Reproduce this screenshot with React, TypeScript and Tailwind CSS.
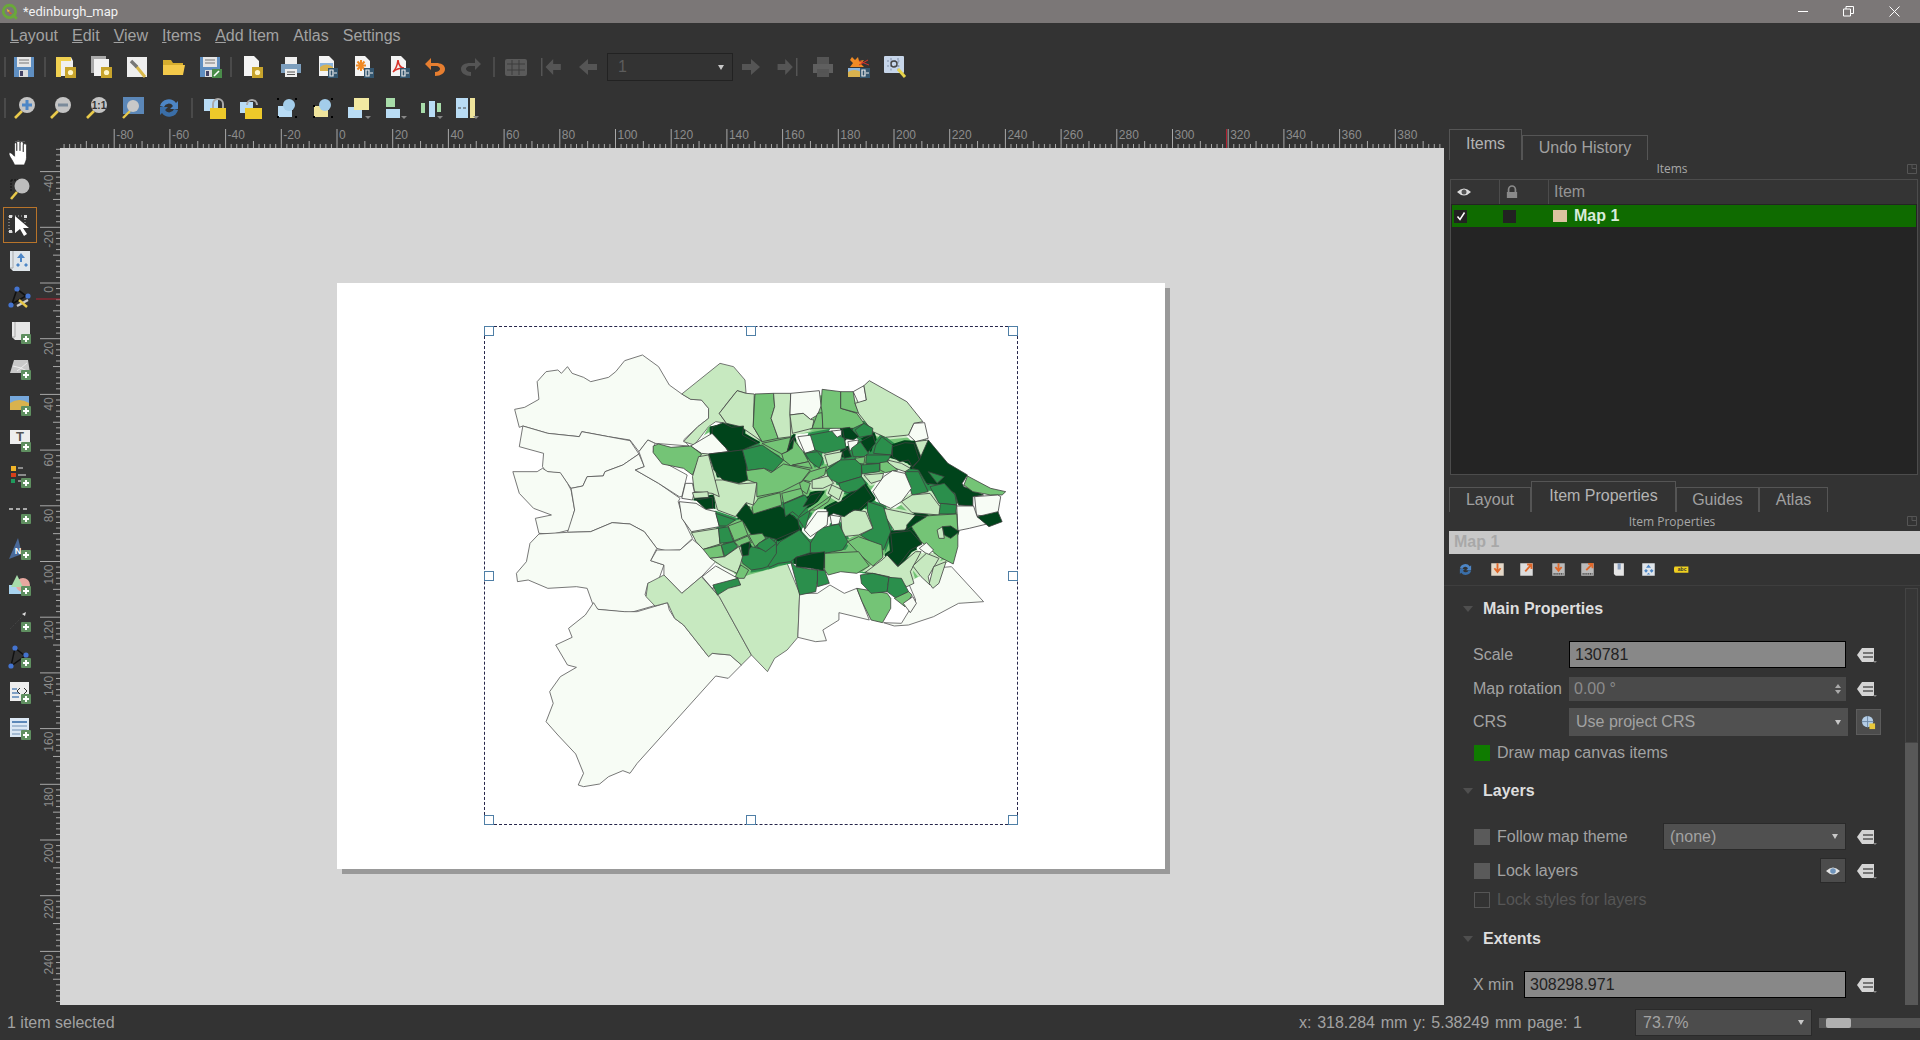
import type { ReactNode } from "react";

const P = "#f7fcf5";
const L = "#c7e9c0";
const M = "#74c476";
const D = "#2b8f4c";
const X = "#00441b";

// outline of the dense middle, used to close the small gaps between the wards
const core = "600,400 640,320 690,310 720,230 1060,225 1230,330 1300,440 1345,520 1340,640 1320,720 1210,780 870,730 700,780 590,640";

// map regions, traced in crop coordinates (see the scale on the group below)
const outer: [string, string][] = [
  [P, "97,268 125,262 165,238 160,185 185,155 218,150 228,160 245,140 258,160 290,172 310,185 360,172 380,155 405,122 455,105 500,140 530,195 565,222 590,238 620,240 640,265 640,295 610,320 570,360 585,378 490,370 470,360 445,395 420,360 360,350 285,335 278,350 190,340 120,318 110,322"],
  [P, "120,318 190,340 278,350 285,335 360,350 420,362 445,402 400,435 350,455 345,468 300,470 288,498 255,505 225,460 185,455 175,440 178,400 110,380"],
  [P, "92,455 160,455 175,445 190,455 225,458 245,490 255,510 265,570 250,630 205,642 165,640 155,595 200,585 150,565 110,520"],
  [P, "255,505 288,498 300,470 345,468 350,455 400,435 445,402 460,440 435,450 500,490 560,535 555,545 570,600 595,655 560,690 520,692 495,685 460,635 420,612 370,608 310,635 245,637 265,570"],
  [P, "445,395 470,360 490,370 485,395 520,430 580,465 565,530 558,530 500,490 435,450 460,440"],
  [P, "165,642 245,637 310,635 370,608 420,612 460,635 495,685 478,722 515,735 500,780 470,790 462,825 495,855 420,878 330,868 315,850 300,805 270,800 190,805 135,780 105,785 102,760 130,725 140,670"],
  [P, "495,690 560,690 595,658 630,690 660,725 620,770 565,820 515,765 515,735 478,722"],
  [P, "318,848 330,868 405,875 440,875 525,848 530,870 545,895 570,915 640,1010 650,1000 700,1005 732,1035 695,1075 660,1068 440,1330 420,1360 400,1352 360,1370 335,1392 290,1400 275,1395 290,1360 268,1302 218,1245 185,1205 205,1150 195,1115 225,1070 270,1042 245,1035 212,975 258,952 248,925 295,885"],
  [L, "470,790 515,765 565,820 620,770 670,830 760,1005 732,1035 700,1005 650,1000 640,1010 570,915 545,895 525,848 490,858 465,830"],
  [L, "670,830 650,805 722,775 770,745 860,730 895,820 890,952 860,990 825,1015 805,1055 760,1005"],
  [P, "895,820 945,820 980,795 1020,820 1055,805 1090,900 1005,878 1005,900 960,930 970,962 940,965 890,952"],
  [P, "1205,750 1320,740 1410,845 1340,850 1270,890 1200,915 1160,918 1130,908 1180,910 1220,840 1210,815 1200,790"],
  [L, "565,222 672,130 710,140 742,180 745,220 720,212 695,245 670,280 690,310 660,305 640,320 600,375 570,365 610,320 640,295 640,265 620,240 590,238"],
];

const inner: [string, string][] = [
  [L, "670,280 720,212 745,220 768,222 765,320 790,365 730,320 690,310"],
  [M, "770,222 822,220 825,260 815,295 835,355 790,365 765,320"],
  [L, "822,220 870,220 868,280 870,350 835,355 815,295 825,260"],
  [P, "870,220 950,212 955,258 945,285 925,298 905,280 868,285"],
  [L, "868,285 905,280 925,298 935,300 930,325 875,340"],
  [M, "945,280 958,278 960,325 930,325"],
  [M, "958,208 1010,215 1010,265 1055,280 1075,310 1045,325 960,325 958,278 955,258"],
  [M, "1010,215 1045,215 1050,250 1062,280 1010,265"],
  [P, "1045,215 1075,197 1082,240 1060,250"],
  [L, "1090,182 1195,245 1240,305 1215,310 1200,345 1135,352 1100,335 1060,280 1050,250 1082,240 1075,197"],
  [P, "1215,310 1245,308 1255,355 1220,365 1200,345"],
  [P, "590,378 650,340 680,370 695,395 640,402 620,400"],
  [M, "485,378 500,372 535,382 590,378 620,402 595,465 570,445 510,432 485,398"],
  [X, "650,322 680,308 705,322 738,318 735,345 778,370 735,390 700,395 680,375 650,340"],
  [X, "640,402 735,390 745,430 750,480 725,490 680,480 655,450"],
  [D, "735,390 790,375 850,420 820,455 795,445 750,452 745,430"],
  [M, "790,370 870,352 860,395 845,402"],
  [M, "875,355 905,395 920,425 870,437 850,420 845,402 860,395"],
  [X, "860,395 868,370 880,350 875,385"],
  [P, "890,350 930,345 938,390 910,400"],
  [D, "925,345 985,333 1020,355 1025,385 965,400 938,390"],
  [D, "910,400 945,395 960,415 950,445 925,425"],
  [L, "965,405 1015,395 1010,420 975,440"],
  [P, "985,333 1012,330 1012,345 1000,352"],
  [X, "1015,325 1035,322 1060,350 1045,360 1020,355"],
  [P, "1030,365 1060,360 1055,380 1035,392"],
  [X, "1015,395 1030,385 1040,410 1020,415"],
  [D, "1050,330 1075,310 1100,325 1098,345 1062,352"],
  [X, "1065,365 1100,345 1107,370 1085,398"],
  [D, "1040,385 1065,365 1088,400 1075,410 1045,410"],
  [D, "1108,375 1125,350 1155,375 1152,405 1102,400"],
  [D, "1082,405 1150,405 1140,430 1080,430"],
  [D, "1068,435 1120,430 1118,455 1070,462"],
  [M, "1050,415 1078,410 1075,432 1055,430"],
  [D, "970,450 1010,420 1050,418 1068,435 1068,470 1005,490 975,475"],
  [D, "1005,490 1068,470 1080,490 1060,510 1030,518 1010,510"],
  [L, "1075,465 1130,460 1125,480 1095,490"],
  [L, "1218,365 1255,360 1290,410 1305,465 1260,445 1240,425"],
  [X, "1155,380 1190,368 1215,370 1230,420 1210,440 1200,420 1175,425 1155,410"],
  [L, "1140,420 1180,430 1205,445 1190,455 1150,440"],
  [M, "1120,428 1140,425 1170,450 1135,458 1120,450"],
  [X, "1255,360 1310,430 1365,465 1350,490 1355,500 1380,510 1410,525 1380,530 1380,558 1340,555 1330,520 1290,495 1250,490 1228,450 1210,445 1230,420"],
  [M, "1365,468 1430,505 1472,515 1462,525 1430,525 1380,515 1355,495"],
  [D, "1260,500 1300,490 1330,525 1335,555 1285,550"],
  [D, "1190,455 1228,455 1255,515 1210,525"],
  [D, "1290,550 1335,555 1332,582 1280,582"],
  [D, "1255,455 1300,470 1280,490"],
  [P, "1100,515 1130,470 1155,452 1190,460 1208,505 1180,545 1150,565 1120,550"],
  [L, "1180,545 1210,525 1260,520 1288,560 1285,585 1210,578"],
  [P, "1385,530 1450,525 1458,530 1450,580 1420,590 1390,585"],
  [P, "1335,558 1382,558 1392,590 1420,612 1370,625 1338,632"],
  [X, "1392,590 1450,575 1462,605 1425,620"],
  [M, "1205,615 1225,590 1285,585 1335,582 1338,632 1338,680 1325,732 1285,710 1235,665"],
  [L, "1280,630 1295,620 1300,655 1285,655"],
  [X, "1295,620 1318,618 1342,635 1318,655 1300,645"],
  [L, "1130,565 1175,575 1220,585 1190,630 1160,632 1135,590"],
  [X, "1195,615 1220,585 1250,590 1220,610 1195,630"],
  [D, "1085,545 1130,560 1150,635 1130,690 1065,645 1100,625 1085,575"],
  [L, "1010,590 1050,570 1080,575 1100,625 1060,645 1015,650"],
  [X, "970,565 1018,540 1045,520 1075,495 1100,535 1085,545 1060,570 1045,570 1020,590 990,580 975,590"],
  [P, "980,585 1010,590 1005,612 985,615"],
  [D, "925,670 950,625 1005,612 1030,665 1015,690 965,700 925,698"],
  [M, "1030,665 1060,650 1125,675 1128,712 1100,738 1065,705"],
  [M, "965,700 1060,695 1090,738 1055,760 1010,755 975,765 965,750"],
  [D, "870,725 885,740 925,748 945,750 945,780 940,815 895,825"],
  [D, "945,752 965,750 978,790 945,800"],
  [D, "840,665 895,630 925,668 925,698 885,712 870,725 835,730 810,742 800,720"],
  [X, "885,712 935,700 965,695 962,752 925,745 885,740"],
  [D, "730,715 760,680 800,690 830,655 830,700 805,740 790,745 760,750 735,730"],
  [X, "715,585 745,550 765,580 840,558 890,600 895,628 830,658 800,650 760,645 740,610"],
  [M, "762,560 780,535 840,518 845,555 765,582"],
  [M, "845,520 900,505 905,525 850,550"],
  [D, "850,552 910,525 925,550 892,590 875,575 855,590"],
  [X, "905,560 925,525 958,515 935,550"],
  [D, "890,595 925,570 910,628"],
  [M, "925,570 960,545 985,525 975,545 940,570"],
  [P, "908,630 945,575 975,575 972,615 925,650"],
  [M, "745,452 795,445 815,458 850,432 925,450 900,485 845,515 775,530 775,490 750,480"],
  [M, "875,435 920,425 930,445"],
  [M, "925,455 970,440 965,465 925,485 905,480"],
  [M, "895,490 905,482 925,490 915,522 900,510"],
  [L, "930,480 975,468 990,490 960,505 930,505"],
  [L, "975,520 985,495 1015,510 1005,540"],
  [L, "660,480 680,480 725,492 775,488 770,525 765,555 745,548 715,590 665,570 650,510"],
  [L, "612,410 640,405 670,530 650,520 600,515 595,470"],
  [P, "575,490 595,490 600,515 595,540 565,535"],
  [L, "595,518 638,515 640,532 600,535"],
  [X, "605,540 650,532 652,565 632,568"],
  [P, "558,545 605,550 632,568 660,575 670,620 592,635 565,595"],
  [D, "660,580 715,600 690,618 670,618"],
  [L, "592,638 668,625 672,672 625,688 605,665"],
  [D, "668,625 695,620 710,665 672,670"],
  [M, "695,618 735,602 750,645 712,662"],
  [M, "712,665 750,648 760,668 725,680"],
  [D, "675,675 710,665 722,680 685,710"],
  [M, "625,688 675,675 683,710 645,715"],
  [X, "730,675 755,665 752,705 735,708"],
  [M, "752,645 790,640 800,655 770,680"],
  [D, "780,670 810,652 830,670 800,695 775,680"],
  [L, "645,715 685,710 725,680 735,710 730,730 720,760 680,740"],
  [M, "715,770 730,735 752,750 740,775 725,775"],
  [P, "622,770 660,738 722,775 650,805"],
  [D, "652,795 722,775 730,795 695,805 665,825"],
  [L, "1078,758 1128,718 1140,705 1170,740 1220,695 1235,695 1205,755 1215,790 1195,800 1145,770 1100,760"],
  [X, "1150,640 1205,632 1238,672 1205,690 1170,738 1140,705 1155,695"],
  [P, "1230,685 1250,668 1270,690 1255,705"],
  [L, "1212,738 1250,700 1285,715 1255,770 1260,795 1235,770"],
  [L, "1258,790 1270,740 1305,725 1285,790 1268,805"],
  [M, "1055,805 1140,820 1150,835 1150,865 1127,908 1095,900 1070,845"],
  [D, "1065,765 1100,760 1145,772 1140,815 1095,820 1068,790"],
  [D, "1145,772 1180,775 1200,815 1165,835 1140,815"],
  [M, "1160,835 1200,815 1210,825 1190,860"],
  [P, "1185,850 1212,830 1222,850 1205,878"],
];

const s = (children: ReactNode, cls = "w-6 h-6") => (
  <svg viewBox="0 0 24 24" className={cls}>{children}</svg>
);

const Gear = () => (
  <g>
    <rect x="12" y="12" width="11" height="11" fill="#c8a42c" />
    <circle cx="17.5" cy="17.5" r="2.6" fill="#fff6c8" />
  </g>
);
const Out = () => (
  <g>
    <rect x="13" y="13" width="10" height="10" fill="#34566f" />
    <path d="M15 15h3v6h-3zM19 18h3" stroke="#eee" strokeWidth="1.2" fill="none" />
  </g>
);
const Plus = () => (
  <g>
    <rect x="13" y="13" width="10" height="10" rx="1" fill="#5f8f60" />
    <path d="M18 15v6M15 18h6" stroke="#fff" strokeWidth="2" />
  </g>
);
const Doc = () => <path d="M4 1h10l5 5v15H4z" fill="#f4f4f4" />;
const Floppy = () => (
  <g>
    <path d="M2 2h20v20H2z" fill="#5f8fc2" />
    <rect x="5" y="2" width="14" height="10" fill="#e6e6e6" />
    <path d="M7 5h10M7 8h10" stroke="#777" strokeWidth="1.2" />
    <rect x="7" y="15" width="9" height="7" fill="#ddd" />
    <rect x="8" y="16" width="3" height="5" fill="#446" />
  </g>
);
const Printer = (c: string, d: string) => (
  <g>
    <rect x="6" y="2" width="12" height="7" fill={d} />
    <path d="M2 9h20v9H18v-3H6v3H2z" fill={c} />
    <rect x="6" y="14" width="12" height="8" fill={d} />
    <path d="M8 17h8M8 19.5h8" stroke="#555" />
  </g>
);
const Arrow = (dir: "l" | "r", bar: boolean) => (
  <g fill="#555">
    {dir === "l" ? <path d="M3 12l9-8v5h9v6h-9v5z" transform={bar ? "translate(3 0) scale(.85 1)" : ""} /> : <path d="M21 12l-9-8v5H3v6h9v5z" transform={bar ? "translate(0 0) scale(.85 1)" : ""} />}
    {bar && <rect x={dir === "l" ? 1 : 21} y="3" width="1.5" height="18" />}
  </g>
);
const Mag = (inner: ReactNode) => (
  <g>
    <path d="M9 15L2 22" stroke="#e8c94a" strokeWidth="2.6" />
    <circle cx="14" cy="9" r="8" fill="#c4c4c4" />
    {inner}
  </g>
);
const DdIcon = () => (
  <svg viewBox="0 0 22 18" className="w-[22px] h-[18px]">
    <path d="M1 9l5-7h12v14H6z" fill="#d4d4d4" />
    <path d="M7 7h10M7 11h10" stroke="#555" strokeWidth="1.4" />
    <path d="M17 15h4l-2 2z" fill="#888" />
  </svg>
);
const Chevron = () => <span className="ml-auto w-0 h-0 border-x-[3px] border-x-transparent border-t-[5px] border-t-[#c8c8c8]" />;

const row1: ReactNode[] = [
  s(<Floppy />),
  s(<><path d="M4 2h14l2 4v15H4z" fill="#f0f0f0" /><path d="M3 2h5v20H3z" fill="#f0d050" /><path d="M3 2h15v4H3z" fill="#f0d050" /><Gear /></>),
  s(<><rect x="2" y="1" width="15" height="17" fill="#aaa" /><rect x="5" y="4" width="15" height="17" fill="#f2f2f2" /><Gear /></>),
  s(<><rect x="2" y="2" width="20" height="20" fill="#eee" /><path d="M11 11l9 11" stroke="#d8b84a" strokeWidth="3" /><path d="M6 6l6 6" stroke="#777" strokeWidth="3.400" /></>),
  s(<><path d="M2 5h8l2 3h10v12H2z" fill="#d6ad2e" /><path d="M2 10h22l-2 10H2z" fill="#f3c94a" /></>),
  s(<><Floppy /><rect x="14" y="14" width="10" height="9" fill="#4a8c4a" /><path d="M16 21l5-5" stroke="#fff" strokeWidth="1.6" /></>),
  s(<><Doc /><Gear /></>),
  s(Printer("#7d9fbe", "#efefef")),
  s(<><Doc /><rect x="5" y="8" width="13" height="8" fill="#d9b24e" /><path d="M5 12q6-5 13 0v-4H5z" fill="#8cb4dc" /><Out /></>),
  s(<><Doc /><path d="M10 5v11M5 10.500h10M6.500 6.500l7 8M13.500 6.500l-7 8" stroke="#f08a24" strokeWidth="2" /><Out /></>),
  s(<><Doc /><path d="M6 17q4-4 5-12 1 8 6 8-7 0-11 4z" fill="none" stroke="#d8332a" strokeWidth="1.6" /><Out /></>),
  s(<path d="M8 3L2 9l6 6v-4h5c3 0 4 2 4 3s-2 3-5 3v4c6 0 10-3 10-7s-4-6-9-6H8z" fill="#e67e30" />),
  s(<path d="M16 3l6 6-6 6v-4h-5c-3 0-4 2-4 3s2 3 5 3v4C6 21 2 18 2 14s4-6 9-6h5z" fill="#555" />),
];
const atlasIcon = s(<><rect x="1" y="4" width="22" height="17" rx="2" fill="#5a5a5a" /><path d="M3 9h18M3 15h18M8 5v15M15 5v15" stroke="#3c3c3c" /></>);
const row1b: ReactNode[] = [
  s(Arrow("r", false)),
  s(Arrow("r", true)),
  s(Printer("#5f5f5f", "#555")),
  s(<><path d="M5 2l3 3 3-3 1 4 5-1-3 4 3 3H3l3-4-3-3z" fill="#f08a24" /><path d="M12 6l10 4M12 10l9-5" stroke="#d8332a" /><rect x="1" y="13" width="13" height="9" fill="#d9b24e" /><path d="M1 17q6-4 13 0v-4H1z" fill="#8cb4dc" /><Out /></>),
  s(<><rect x="1" y="1" width="20" height="17" rx="1" fill="#c7d6ea" /><path d="M4 6h14M4 11h14M8 3v13M15 3v13" stroke="#7f8fa8" strokeDasharray="2 1.500" /><circle cx="11" cy="9" r="3" fill="none" stroke="#444" strokeWidth="1.400" /><path d="M15 14l7 8" stroke="#e8d44a" strokeWidth="3" /></>),
];
const row2: ReactNode[] = [
  s(Mag(<path d="M14 4v10M9 9h10" stroke="#4d86c6" strokeWidth="3" />)),
  s(Mag(<path d="M9 9h10" stroke="#7a8a9a" strokeWidth="3" />)),
  s(Mag(<text x="14" y="13" fontSize="10" fontWeight="bold" textAnchor="middle" fill="#333">1:1</text>)),
  s(<><rect x="2" y="1" width="21" height="17" fill="#5b87b8" /><path d="M9 15L2 22" stroke="#e8c94a" strokeWidth="2.400" /><circle cx="12" cy="10" r="6" fill="#c8c8c8" /></>),
  s(<><path d="M3 10a9 9 0 0 1 16-3l2-2v8h-8l3-3a5 5 0 0 0-9 1z" fill="#4d86c6" /><path d="M21 14a9 9 0 0 1-16 3l-2 2v-8h8l-3 3a5 5 0 0 0 9-1z" fill="#3a6ea8" /></>),
];
const Lock = () => (
  <g>
    <path d="M10 12V8a5 5 0 0 1 10 0v4" fill="none" stroke="#aaa" strokeWidth="2" />
    <rect x="7" y="12" width="16" height="11" fill="#edc92a" />
  </g>
);
const row2b: ReactNode[] = [
  s(<><rect x="1" y="3" width="14" height="12" fill="#b9dcf5" /><Lock /></>),
  s(<><rect x="1" y="6" width="13" height="11" fill="#b9dcf5" /><path d="M8 9a5 5 0 0 1 10 0" fill="none" stroke="#aaa" strokeWidth="2" /><rect x="6" y="12" width="17" height="11" fill="#edc92a" /></>),
  s(<><rect x="3" y="10" width="14" height="11" fill="#b9dcf5" /><circle cx="14" cy="9" r="6" fill="#a3cdea" /><path d="M2 3h2M2 21h2M20 3h2M20 21h2" stroke="#000" strokeWidth="2" /></>),
  s(<><rect x="3" y="10" width="14" height="11" fill="#efe49c" /><circle cx="14" cy="9" r="6" fill="#a3cdea" /><path d="M2 10h2M2 21h2M20 3h2M20 21h2" stroke="#000" strokeWidth="2" /></>),
  s(<><rect x="1" y="11" width="14" height="11" fill="#b9dcf5" /><rect x="7" y="2" width="15" height="12" fill="#f2e9a2" /><path d="M18 20h6l-3 3z" fill="#888" /></>),
  s(<><rect x="3" y="2" width="9" height="9" fill="#a8dcaa" /><rect x="3" y="13" width="14" height="9" fill="#b9dcf5" /><path d="M18 20h6l-3 3z" fill="#888" /></>),
  s(<><rect x="2" y="7" width="4" height="10" fill="#a8dcaa" /><rect x="10" y="5" width="6" height="16" fill="#b9dcf5" /><rect x="18" y="7" width="4" height="9" fill="#a8dcaa" /><path d="M18 20h6l-3 3z" fill="#888" /></>),
  s(<><rect x="1" y="2" width="12" height="20" fill="#b9dcf5" /><rect x="15" y="2" width="5" height="20" fill="#efe49c" /><path d="M3 12h3M11 12H8" stroke="#444" /><path d="M18 20h6l-3 3z" fill="#888" /></>),
];

const tools: ReactNode[] = [
  s(<path d="M7 23C5 18 1 14 2 12c1-1 3 1 5 3V4c0-2 2-2 2 0v6V2c0-2 3-2 3 0v8V3c0-2 3-2 3 0v8V5c0-2 3-2 3 0v11c0 3-1 4-2 7z" fill="#fff" stroke="#222" strokeWidth=".6" />, "w-[26px] h-[26px]"),
  s(<><path d="M3 3h9M3 3v12" stroke="#111" strokeDasharray="2 1" /><path d="M9 15L3 22" stroke="#e8c94a" strokeWidth="2.600" /><circle cx="14" cy="9" r="7.500" fill="#bdbdbd" /></>),
  s(<><path d="M1 3h16M1 3v16M17 3v8M1 19h8" stroke="#bbb" strokeDasharray="1 2" /><rect x="1" y="2" width="3" height="3" fill="#ddd" /><rect x="1" y="17" width="3" height="3" fill="#ddd" /><rect x="16" y="2" width="3" height="3" fill="#ddd" /><path d="M7 3v17l5-4 4 7 3-2-4-6h6z" fill="#fff" /></>),
  s(<><path d="M2 2h20v20H5l-3-3z" fill="#dfe5ea" /><path d="M5 2v17H2" fill="none" stroke="#aaa" /><path d="M13 4l4 5h-3v4h-2V9H9zM8 16l2-2 2 2-2 2zM16 16l2-2 2 2-2 2z" fill="#4d86c6" /></>),
  s(<><path d="M4 19L9 4l9 7z" fill="none" stroke="#111" strokeWidth="1.600" /><circle cx="3" cy="20" r="2.600" fill="#4474d0" /><circle cx="9" cy="4" r="2.600" fill="#4474d0" /><circle cx="20" cy="11" r="2.600" fill="#4474d0" /><path d="M9 21L20 15" stroke="#ccc" strokeWidth="2.400" /><path d="M11 15l8 7" stroke="#e8c94a" strokeWidth="2.400" /></>),
  s(<><path d="M4 1h18v18H7l-3-3z" fill="#e6e6e6" /><path d="M7 1v15H4" fill="none" stroke="#aaa" /><Plus /></>),
  s(<><path d="M6 3h14l2 13H2z" fill="#c9c9c9" /><path d="M5 9l8 2 6-5M9 14l4-3 6 3" stroke="#eee" fill="none" /><Plus /></>),
  s(<><rect x="2" y="3" width="19" height="14" fill="#d9b24e" /><path d="M2 10q9-6 19 0V3H2z" fill="#76a8dc" /><Plus /></>),
  s(<><rect x="2" y="1" width="20" height="14" fill="#eee" /><text x="12" y="12" fontSize="13" textAnchor="middle" fill="#555" fontWeight="bold">T</text><Plus /></>),
  s(<><rect x="3" y="1" width="5" height="5" fill="#f0b428" /><rect x="3" y="8" width="5" height="4" fill="#d8401a" /><rect x="3" y="14" width="4" height="4" fill="#1f9a5c" /><path d="M10 3h5M10 10h8M10 16h3" stroke="#aaa" strokeWidth="1.500" /><Plus /></>),
  s(<><path d="M1 8h4M8 8h4M15 8h4" stroke="#aaa" strokeWidth="2" /><Plus /></>),
  s(<><path d="M1 22L10 1l4 16z" fill="#4a6a9a" /><text x="10" y="17" fontSize="9" fill="#fff" fontWeight="bold" textAnchor="middle">N</text><Plus /></>),
  s(<><rect x="1" y="12" width="14" height="9" fill="#a9d4f0" /><circle cx="15" cy="12" r="7" fill="#e8a8a0" /><path d="M9 2l6 12H3z" fill="#a8dcaa" /><Plus /></>),
  s(<><path d="M2 20l12-12" stroke="#444" strokeDasharray="2 1.500" /><path d="M14 5l4-2-1 4z" fill="#ddd" /><Plus /></>),
  s(<><path d="M3 21L7 3l10 8z" fill="none" stroke="#111" strokeWidth="1.400" /><circle cx="3" cy="21" r="2.600" fill="#4474d0" /><circle cx="7" cy="3" r="2.600" fill="#4474d0" /><circle cx="18" cy="10" r="2.600" fill="#4474d0" /><Plus /></>),
  s(<><rect x="2" y="1" width="19" height="19" fill="#eee" /><path d="M4 8h5M4 12h7M4 16h7" stroke="#5b87b8" strokeWidth="1.400" /><path d="M12 7l-3 3 3 3M16 7l3 3-3 3" fill="none" stroke="#333" /><Plus /></>),
  s(<><rect x="2" y="1" width="19" height="19" fill="#dce8f4" /><path d="M4 5h15" stroke="#5b87b8" strokeWidth="2" /><path d="M4 9h15M4 13h15M4 17h8" stroke="#6f90b4" /><Plus /></>),
];

const panelIcons: [string, ReactNode][] = [
  ["ml-[9px]", s(<><path d="M3 10a9 9 0 0 1 16-3l2-2v8h-8l3-3a5 5 0 0 0-9 1z" fill="#4d86c6" /><path d="M21 14a9 9 0 0 1-16 3l-2 2v-8h8l-3 3a5 5 0 0 0 9-1z" fill="#3a6ea8" /></>, "w-[15px] h-[15px]")],
  ["ml-[17px]", s(<><rect x="2" y="2" width="20" height="20" fill="#e4d8c8" /><path d="M12 2v12M7 10l5 6 5-6" stroke="#e0682a" strokeWidth="3" fill="none" /></>, "w-[15px] h-[15px]")],
  ["ml-[14px]", s(<><rect x="2" y="2" width="20" height="20" fill="#ddd" /><path d="M10 15l9-10M13 4h7v7" stroke="#e0682a" strokeWidth="3" fill="none" /></>, "w-[15px] h-[15px]")],
  ["ml-[17px]", s(<><rect x="2" y="2" width="20" height="20" fill="#bbb" /><path d="M12 2v10M7 8l5 6 5-6" stroke="#e0682a" strokeWidth="3" fill="none" /><path d="M4 19h16" stroke="#555" strokeWidth="3" strokeDasharray="2 1" /></>, "w-[15px] h-[15px]")],
  ["ml-[14px]", s(<><rect x="2" y="2" width="20" height="20" fill="#bbb" /><path d="M10 13l9-9M13 3h7v7" stroke="#e0682a" strokeWidth="3" fill="none" /><path d="M4 19h16" stroke="#555" strokeWidth="3" strokeDasharray="2 1" /></>, "w-[15px] h-[15px]")],
  ["ml-[17px]", s(<><path d="M3 2h16v20H6l-3-3z" fill="#e6e6e6" /><path d="M9 2v10h5V2" fill="#8aa0c0" /></>, "w-[15px] h-[15px]")],
  ["ml-[14px]", s(<><rect x="2" y="2" width="20" height="20" fill="#dfe5ea" /><path d="M12 4l4 5H8zM5 14l3-3 3 3-3 3zM14 14l3-3 3 3-3 3zM9 20l3-3 3 3z" fill="#4d86c6" /></>, "w-[15px] h-[15px]")],
  ["ml-[18px]", s(<><path d="M1 7h22v10H1L-1 12z" fill="#f0d020" /><text x="13" y="15" fontSize="8" fontWeight="bold" textAnchor="middle" fill="#333">abc</text></>, "w-[15px] h-[15px]")],
];

const Slot = ({ children }: { children: ReactNode }) => (
  <div className="w-9 h-9 flex items-center justify-center shrink-0">{children}</div>
);
const Gap = ({ w }: { w: string }) => <span className={`${w} h-5 shrink-0 flex justify-center`}><span className="w-0.5 h-full bg-[#4a4a4a]" /></span>;

function HRuler() {
  const ticks = [];
  for (let v = -98; v <= 396; v += 2) {
    const x = 277 + v * 2.785;
    const major = v % 20 === 0;
    const mid = v % 10 === 0;
    ticks.push(<line key={v} x1={x} x2={x} y1={major ? 2 : mid ? 14 : 17} y2={21} stroke="#a8a8a8" strokeWidth="1" />);
    if (major) ticks.push(<text key={`t${v}`} x={x + 2} y={12} fontSize="12" fill="#8c8c8c">{v}</text>);
  }
  return <svg width="1384" height="21" className="block">{ticks}</svg>;
}

function VRuler() {
  const ticks = [];
  for (let v = -48; v <= 258; v += 2) {
    const y = 135 + v * 2.785;
    const major = v % 20 === 0;
    const mid = v % 10 === 0;
    ticks.push(<line key={v} y1={y} y2={y} x1={major ? 4 : mid ? 17 : 20} x2={24} stroke="#a8a8a8" strokeWidth="1" />);
    if (major) ticks.push(<text key={`t${v}`} x={17} y={y + 3} fontSize="12" fill="#8c8c8c" textAnchor="end" transform={`rotate(-90 17 ${y + 3})`}>{v}</text>);
  }
  ticks.push(<line key="red" x1={0} x2={24} y1={151} y2={151} stroke="#b02030" strokeWidth="1" />);
  return <svg width="24" height="857" className="block shrink-0">{ticks}</svg>;
}

const Handle = ({ cls }: { cls: string }) => <span className={`absolute w-[10px] h-[10px] bg-white/40 border border-[#4f7fa6] ${cls}`} />;

function MapFrame() {
  return (
    <div className="relative ml-[147px] mt-[43px] w-[534px] h-[499px] border border-dashed border-[#26264a]">
      <svg viewBox="0 0 534 499" className="absolute -left-px -top-px w-[534px] h-[499px]">
        <defs>
          <clipPath id="core"><polygon points={core} /></clipPath>
        </defs>
        <g transform="translate(-4 -6) scale(0.35714 0.33333)">
          {outer.map(([c, p], i) => (
            <polygon key={i} points={p} fill={c} stroke="#555" strokeWidth="0.8" vectorEffect="non-scaling-stroke" strokeLinejoin="round" />
          ))}
          <polygon points={core} fill={M} />
          <g clipPath="url(#core)">
            {inner.map(([c, p], i) => (
              <polygon key={i} points={p} fill={c} stroke={c} strokeWidth="5" vectorEffect="non-scaling-stroke" strokeLinejoin="round" />
            ))}
          </g>
          {inner.map(([c, p], i) => (
            <polygon key={i} points={p} fill={c} stroke="#3f3f3f" strokeWidth="0.8" vectorEffect="non-scaling-stroke" strokeLinejoin="round" />
          ))}
        </g>
      </svg>
      <Handle cls="-left-px -top-px" />
      <Handle cls="left-[261px] -top-px" />
      <Handle cls="-right-px -top-px" />
      <Handle cls="-left-px top-[244px]" />
      <Handle cls="-right-px top-[244px]" />
      <Handle cls="-left-px -bottom-px" />
      <Handle cls="left-[261px] -bottom-px" />
      <Handle cls="-right-px -bottom-px" />
    </div>
  );
}

const Tab = ({ label, active, w }: { label: string; active?: boolean; w: string }) => (
  <div className={`${w} ${active ? "h-[31px] text-[#b4b4b4] pb-[2px]" : "h-[25px] text-[#a0a0a0]"} border border-b-0 border-[#555] flex items-center justify-center text-base`}>{label}</div>
);

const Float = () => (
  <svg viewBox="0 0 10 10" className="absolute right-[3px] top-1 w-[10px] h-[10px]"><path d="M.5.500h9v9h-9zM5 .500v4h4" fill="none" stroke="#555" /></svg>
);

const Section = ({ label, cls }: { label: string; cls: string }) => (
  <div className={`${cls} h-[26px] flex items-center pl-[19px] shrink-0`}>
    <span className="w-0 h-0 border-x-[5px] border-x-transparent border-t-[6px] border-t-[#4f4f4f] mr-[10px]" />
    <span className="font-bold text-base text-[#dedede]">{label}</span>
  </div>
);

const Input = ({ value, w }: { value: string; w: string }) => (
  <div className={`${w} h-[27px] bg-[#888888] border border-black flex items-center pl-[5px] text-base text-[#222]`}>{value}</div>
);

export default function App() {
  return (
    <div className="w-[1920px] h-[1040px] flex flex-col overflow-hidden bg-[#333333] font-['Liberation_Sans',Arial,sans-serif] text-[#a2a2a2]">
      {/* title bar */}
      <div className="h-[23px] bg-[#7b7777] flex items-center shrink-0 relative">
        <svg viewBox="0 0 16 16" className="w-[18px] h-[18px] ml-px">
          <circle cx="7.500" cy="7.500" r="5.500" fill="none" stroke="#6aa83a" strokeWidth="2.500" />
          <path d="M10 10l4 4" stroke="#6aa83a" strokeWidth="2.500" />
          <path d="M6 7l4 2-2 1z" fill="#e05a2a" />
          <path d="M5 5l3 2-2 1z" fill="#f0c030" />
        </svg>
        <span className="ml-[4px] text-[13px] text-[#f2f2f2] font-['Roboto',sans-serif]">*edinburgh_map</span>
        <div className="ml-auto flex items-center pr-[20px] gap-[35px]">
          <span className="w-[10px] h-px bg-white" />
          <svg viewBox="0 0 11 11" className="w-[11px] h-[11px]"><path d="M.5 3h7v7h-7zM3 3V.5h7.500v7H8" fill="none" stroke="#fff" /></svg>
          <svg viewBox="0 0 11 11" className="w-[11px] h-[11px]"><path d="M.5.500l10 10M10.500.500l-10 10" stroke="#fff" /></svg>
        </div>
      </div>
      {/* menu */}
      <div className="h-[24px] flex items-center pl-[10px] pt-[2px] gap-[14px] text-base shrink-0">
        <span><u>L</u>ayout</span>
        <span><u>E</u>dit</span>
        <span><u>V</u>iew</span>
        <span><u>I</u>tems</span>
        <span><u>A</u>dd Item</span>
        <span>Atlas</span>
        <span>Settings</span>
      </div>
      {/* toolbars */}
      <div className="h-[40px] flex items-center pl-[4px] shrink-0">
        <Gap w="w-[2px]" />
        <Slot>{row1[0]}</Slot>
        <Gap w="w-[5px]" />
        {row1.slice(1, 5).map((ic, i) => <Slot key={i}>{ic}</Slot>)}
        <span className="w-px shrink-0" />
        <Slot>{row1[5]}</Slot>
        <Gap w="w-[6px]" />
        <Slot>{row1[6]}</Slot>
        <span className="w-[3px] shrink-0" />
        {row1.slice(7, 13).map((ic, i) => <Slot key={i}>{ic}</Slot>)}
        <Gap w="w-[9px]" />
        <Slot>{atlasIcon}</Slot>
        <Slot>{s(Arrow("l", true))}</Slot>
        <Slot>{s(Arrow("l", false))}</Slot>
        <div className="w-[126px] h-[28px] ml-px border border-[#222] flex items-center pl-[10px] pr-[8px] text-base text-[#5c5c5c] shrink-0">1<Chevron /></div>
        {row1b.map((ic, i) => <Slot key={i}>{ic}</Slot>)}
      </div>
      <div className="h-[40px] flex items-center pl-[4px] pt-[2px] shrink-0">
        <Gap w="w-[2px]" />
        <span className="w-px shrink-0" />
        {row2.map((ic, i) => <Slot key={i}>{ic}</Slot>)}
        <Gap w="w-[10px]" />
        {row2b.map((ic, i) => <Slot key={i}>{ic}</Slot>)}
      </div>

      <div className="flex-1 flex min-h-0">
        {/* layout view */}
        <div className="w-[1444px] flex flex-col shrink-0">
          <div className="h-[21px] flex shrink-0">
            <div className="w-[60px] shrink-0" />
            <div className="relative">
              <HRuler />
              <span className="absolute left-[1166px] top-[2px] w-px h-[19px] bg-[#b02030]" />
            </div>
          </div>
          <div className="flex-1 flex min-h-0">
            <div className="w-[36px] flex flex-col shrink-0 relative -mt-[13px]">
              <span className="absolute left-[15px] top-[6px] w-[10px] h-px bg-[#5a5a5a]" />
              {tools.map((ic, i) => (
                <div key={i} className={`h-9 w-[34px] ml-[3px] flex items-center justify-center ${i === 2 ? "border border-[#b8742a]" : ""}`}>{ic}</div>
              ))}
            </div>
            <VRuler />
            <div className="flex-1 bg-[#d6d6d6] pl-[277px] pt-[135px] overflow-hidden">
              <div className="w-[828px] h-[586px] bg-white shadow-[5px_5px_0_#999999] flow-root">
                <MapFrame />
              </div>
            </div>
          </div>
        </div>

        {/* side panel */}
        <div className="flex-1 flex flex-col min-w-0">
          <div className="h-[33px] flex items-end pl-[5px] shrink-0">
            <Tab label="Items" active w="w-[73px]" />
            <Tab label="Undo History" w="w-[126px]" />
          </div>
          <div className="h-[19px] relative flex items-center justify-center text-xs text-[#a8a8a8] font-['Open_Sans',sans-serif] pr-[20px] pb-[2px] shrink-0">Items<Float /></div>
          <div className="ml-[6px] w-[468px] h-[296px] bg-[#242424] border border-[#4c4c4c] shrink-0">
            <div className="h-[24px] bg-[#343434] flex items-center text-base text-[#949494]">
              <div className="w-[49px] h-full border-r border-[#4c4c4c] flex items-center pl-[5px]">
                <svg viewBox="0 0 16 12" className="w-4 h-3"><path d="M1 6q7-7 14 0-7 7-14 0z" fill="#ddd" /><circle cx="8" cy="6" r="2.500" fill="#555" /></svg>
              </div>
              <div className="w-[49px] h-full border-r border-[#4c4c4c] flex items-center pl-[6px]">
                <svg viewBox="0 0 14 16" className="w-3 h-[14px]"><path d="M3 8V5a4 4 0 0 1 8 0v3" fill="none" stroke="#8a8a8a" strokeWidth="2" /><rect x="1" y="8" width="12" height="7" fill="#8a8a8a" /></svg>
              </div>
              <span className="ml-[5px]">Item</span>
            </div>
            <div className="h-[22px] mt-px mx-px bg-[#0f6b00] flex items-center">
              <div className="w-[48px] pl-[2px]">
                <div className="w-[13px] h-[13px] bg-[#222] flex items-center justify-center">
                  <svg viewBox="0 0 10 10" className="w-[10px] h-[10px]"><path d="M1.500 5.500l2.500 3 4.500-7" fill="none" stroke="#fff" strokeWidth="1.500" /></svg>
                </div>
              </div>
              <div className="w-[49px] pl-[3px]"><div className="w-[13px] h-[13px] bg-[#222]" /></div>
              <span className="w-[14px] h-[12px] ml-[4px] bg-[#dcc3a0] mr-[7px]" />
              <span className="font-bold text-base text-[#d8ecd8]">Map 1</span>
            </div>
          </div>
          <div className="h-[37px] flex items-end pl-[5px] shrink-0">
            <Tab label="Layout" w="w-[82px]" />
            <Tab label="Item Properties" active w="w-[145px]" />
            <Tab label="Guides" w="w-[83px]" />
            <Tab label="Atlas" w="w-[69px]" />
          </div>
          <div className="h-[19px] relative flex items-center justify-center text-xs text-[#a8a8a8] font-['Open_Sans',sans-serif] pr-[20px] shrink-0">Item Properties<Float /></div>
          <div className="ml-[5px] h-[23px] bg-[#c8c8c8] flex items-center pl-[5px] pb-[2px] font-bold text-base text-[#a8a8a8] shrink-0">Map 1</div>
          <div className="h-[32px] flex items-center border-b border-[#3e3e3e] shrink-0 pl-[5px]">
            {panelIcons.map(([ml, ic], i) => (
              <span key={i} className={`${ml} flex`}>{ic}</span>
            ))}
          </div>
          <div className="flex-1 flex min-h-0 text-base">
            <div className="flex-1 pt-[10px] flex flex-col">
              <Section label="Main Properties" cls="" />
              <div className="mt-[19px] pl-[29px] flex items-center h-[27px]">
                <span className="w-[96px]">Scale</span>
                <Input value="130781" w="w-[277px]" />
                <span className="ml-[10px] flex"><DdIcon /></span>
              </div>
              <div className="mt-[9px] pl-[29px] flex items-center h-[24px]">
                <span className="w-[96px]">Map rotation</span>
                <div className="w-[277px] h-[24px] bg-[#4a4a4a] flex items-center pl-[5px] pr-[5px] text-[#8c8c8c]">
                  0.00 °
                  <span className="ml-auto flex flex-col gap-[2px]">
                    <span className="w-0 h-0 border-x-[3px] border-x-transparent border-b-[4px] border-b-[#aaa]" />
                    <span className="w-0 h-0 border-x-[3px] border-x-transparent border-t-[4px] border-t-[#aaa]" />
                  </span>
                </div>
                <span className="ml-[10px] flex"><DdIcon /></span>
              </div>
              <div className="mt-[7px] pl-[29px] flex items-center h-[28px]">
                <span className="w-[96px]">CRS</span>
                <div className="w-[279px] h-[28px] bg-[#505050] flex items-center pl-[7px] pr-[7px] text-[#a2a2a2]">Use project CRS<Chevron /></div>
                <div className="ml-[8px] w-[25px] h-[26px] bg-[#4c4c4c] border border-[#5c5c5c] flex items-center justify-center">
                  <svg viewBox="0 0 16 16" className="w-[15px] h-[15px]"><circle cx="7" cy="7" r="6" fill="#b4cde6" /><path d="M1 7h12M7 1v12" stroke="#6d8aa8" /><rect x="9" y="9" width="6" height="6" fill="#e8c83a" /></svg>
                </div>
              </div>
              <div className="mt-[7px] pl-[30px] flex items-center h-[20px]">
                <span className="w-4 h-4 bg-[#0f7b00] mr-[7px]" />
                Draw map canvas items
              </div>
              <Section label="Layers" cls="mt-[15px]" />
              <div className="mt-[19px] pl-[30px] flex items-center h-[27px]">
                <span className="w-4 h-4 bg-[#5a5a5a] mr-[7px]" />
                <span className="w-[166px]">Follow map theme</span>
                <div className="w-[183px] h-[27px] bg-[#505050] border border-[#2a2a2a] flex items-center pl-[6px] pr-[7px]">(none)<Chevron /></div>
                <span className="ml-[10px] flex"><DdIcon /></span>
              </div>
              <div className="mt-[8px] pl-[30px] flex items-center h-[25px]">
                <span className="w-4 h-4 bg-[#5a5a5a] mr-[7px]" />
                <span className="w-[323px]">Lock layers</span>
                <div className="w-[26px] h-[25px] bg-[#4c4c4c] border border-[#2a2a2a] flex items-center justify-center">
                  <svg viewBox="0 0 16 12" className="w-4 h-3"><path d="M1 6q7-7 14 0-7 7-14 0z" fill="#e4e4e4" /><circle cx="8" cy="6" r="2.800" fill="#6f94bb" /></svg>
                </div>
                <span className="ml-[10px] flex"><DdIcon /></span>
              </div>
              <div className="mt-[7px] pl-[30px] flex items-center h-[20px] text-[#565656]">
                <span className="w-4 h-4 border border-[#565656] mr-[7px]" />
                Lock styles for layers
              </div>
              <Section label="Extents" cls="mt-[16px]" />
              <div className="mt-[19px] pl-[29px] flex items-center h-[27px]">
                <span className="w-[51px]">X min</span>
                <Input value="308298.971" w="w-[322px]" />
                <span className="ml-[10px] flex"><DdIcon /></span>
              </div>
            </div>
            <div className="w-[13px] mr-[2px] mt-[2px] flex flex-col shrink-0">
              <div className="h-[155px] border border-[#444] bg-[#363636]" />
              <div className="flex-1 bg-[#585858]" />
            </div>
          </div>
        </div>
      </div>

      {/* status bar */}
      <div className="h-[35px] flex items-center text-base shrink-0">
        <span className="ml-[7px]">1 item selected</span>
        <span className="ml-auto [word-spacing:1.3px]">x: 318.284 mm y: 5.38249 mm page: 1</span>
        <div className="ml-[53px] w-[177px] h-[27px] bg-[#4c4c4c] border border-[#2a2a2a] flex items-center pl-[7px] pr-[7px]">73.7%<Chevron /></div>
        <div className="ml-[7px] w-[101px] h-[10px] bg-[#555] flex items-center pl-[7px]">
          <span className="w-[25px] h-[10px] rounded-[2px] bg-[#b0b0b0]" />
        </div>
      </div>
    </div>
  );
}
